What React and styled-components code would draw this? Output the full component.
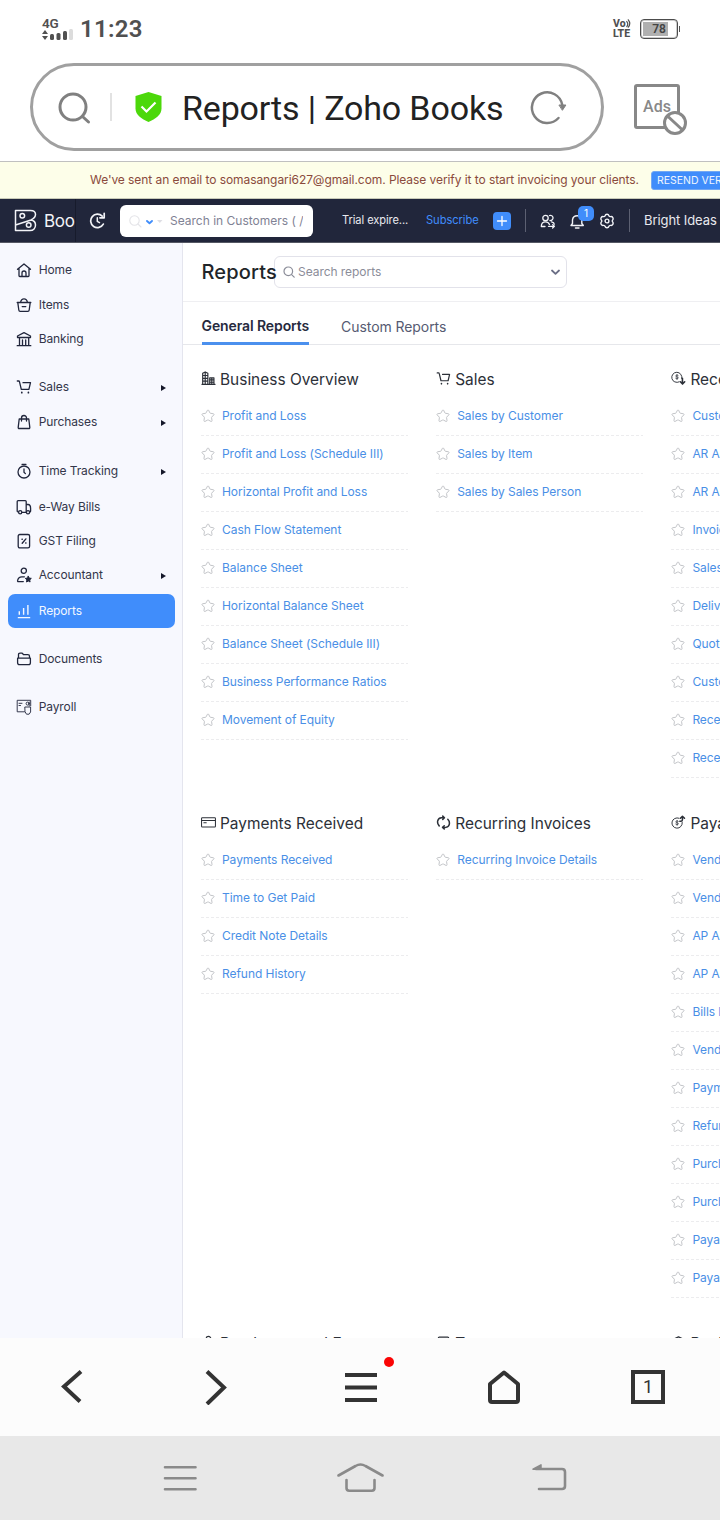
import React from "react";
import styled, { createGlobalStyle, css } from "styled-components";

const Global = createGlobalStyle`
  * { box-sizing: border-box; }
  html, body { margin: 0; padding: 0; background: #fff; }
  body { font-family: Inter, "Liberation Sans", sans-serif; overflow: hidden; }
`;

const Screen = styled.div`
  width: 720px;
  height: 1520px;
  display: flex;
  flex-direction: column;
  overflow: hidden;
  background: #fff;
`;

/* ---------- phone status bar ---------- */
const StatusBar = styled.header`
  height: 56px;
  flex: none;
  display: flex;
  align-items: flex-start;
  padding: 16px 42px 0 42px;
  color: #505050;
  font-family: Roboto, sans-serif;
`;
const Signal = styled.div`
  width: 31px;
  margin-right: 7px;
  font-size: 13.5px;
  line-height: 14px;
  font-weight: 600;
  letter-spacing: -0.3px;
  svg { display: block; margin-top: -1px; }
`;
const Clock = styled.div`
  flex: 1;
  font-size: 24px;
  line-height: 26px;
  font-weight: 600;
  letter-spacing: 0.25px;
`;
const Volte = styled.div`
  width: 20px;
  margin: 3px 7px 0 0;
  font-size: 10.5px;
  line-height: 10px;
  font-weight: 800;
  display: flex;
  flex-direction: column;
  span:first-child { display: flex; }
`;
const Battery = styled.div`
  position: relative;
  width: 38px;
  height: 20px;
  margin-top: 3px;
  padding: 1.5px 2px;
  border: 1.5px solid #4c4c4c;
  border-radius: 4px;
  display: flex;
  background: linear-gradient(#b0b0b0, #b0b0b0) 2px 2px / 25px 14px no-repeat;
  box-shadow: inset 0 0 0 1px #ccc;
  justify-content: center;
  font-size: 12px;
  line-height: 15px;
  font-weight: 600;
  color: #444;
  &::after {
    content: "";
    position: absolute;
    right: -3px;
    top: 6px;
    width: 1px;
    height: 6px;
    background: #555;
  }
`;

/* ---------- browser address bar ---------- */
const AddressRow = styled.div`
  height: 105px;
  flex: none;
  display: flex;
  align-items: flex-start;
  padding: 7px 0 0 30px;
`;
const AddressBox = styled.div`
  width: 574px;
  height: 88px;
  border: 3px solid #a0a0a0;
  border-radius: 44px;
  display: flex;
  align-items: center;
  padding-left: 25px;
`;
const AddressDivider = styled.i`
  width: 2px;
  height: 28px;
  margin: 0 22px 0 18px;
  background: #e2e2e2;
`;
const PageTitle = styled.div`
  width: 347px;
  margin: 1px 0 0 19px;
  font: 400 34px/44px Roboto, sans-serif;
  color: #222;
  white-space: nowrap;
  letter-spacing: -0.15px;
`;
const AdsButton = styled.div`
  margin: 21px 0 0 30px;
  position: relative;
  width: 46px;
  height: 45px;
  border: 3px solid #888;
  border-radius: 3px;
  font: 500 16px/39px Roboto, sans-serif;
  text-align: center;
  color: #888;
  svg { position: absolute; left: 25px; top: 23px; }
`;

/* ---------- verification banner ---------- */
const Banner = styled.div`
  height: 38px;
  flex: none;
  display: flex;
  align-items: center;
  padding-left: 90px;
  border-top: 1px solid #c0c0c0;
  border-bottom: 1px solid #c9cbb8;
  background: #fdfee9;
  color: #8a4a3c;
  font-size: 12px;
  white-space: nowrap;
  overflow: hidden;
`;
const BannerText = styled.span`
  width: 561px;
  flex: none;
  padding-bottom: 2px;
  letter-spacing: -0.07px;
`;
const ResendButton = styled.button`
  flex: none;
  height: 19px;
  margin-top: 1px;
  padding: 0 5px;
  border: 1px solid #73a8f3;
  border-radius: 3px;
  background: #408dfb;
  color: #eef5ff;
  font: 400 10.5px/16px Inter, sans-serif;
  white-space: nowrap;
`;

/* ---------- app top bar ---------- */
const TopBar = styled.nav`
  height: 44px;
  flex: none;
  display: flex;
  align-items: center;
  border-bottom: 1px solid #555864;
  background: #21263b;
  color: #f2f3f7;
  white-space: nowrap;
  overflow: hidden;
`;
const Brand = styled.div`
  width: 76px;
  height: 43px;
  flex: none;
  padding-left: 14px;
  display: flex;
  align-items: center;
  border-right: 1px solid #171b2c;
  svg { flex: none; }
`;
const BrandName = styled.span`
  width: 31px;
  margin-left: 7px;
  overflow: hidden;
  font-size: 17px;
  line-height: 24px;
  letter-spacing: -0.3px;
`;
const Slot = styled.div`
  position: relative;
  flex: none;
  width: ${(p) => p.$w}px;
  margin-left: ${(p) => p.$ml || 0}px;
  display: flex;
  align-items: center;
`;
const GlobalSearch = styled.div`
  width: 193px;
  height: 32px;
  flex: none;
  margin-left: 14px;
  padding-left: 9px;
  border-radius: 6px;
  background: #fff;
  color: #7f8294;
  display: flex;
  align-items: center;
  font-size: 12px;
`;
const GlobalSearchText = styled.span`
  width: 133px;
  margin-left: 7px;
  overflow: hidden;
`;
const TopText = styled.span`
  flex: none;
  width: ${(p) => p.$w}px;
  margin-left: ${(p) => p.$ml}px;
  padding-bottom: 1px;
  font-size: ${(p) => p.$size}px;
  letter-spacing: -0.08px;
  color: ${(p) => p.$color || "#e8e9ee"};
`;
const AddButton = styled.button`
  width: 18px;
  height: 18px;
  margin: 1px 0 0 15px;
  padding: 0;
  flex: none;
  border: 0;
  border-radius: 4px;
  background: #408dfb;
  display: flex;
  align-items: center;
  justify-content: center;
`;
const TopDivider = styled.i`
  flex: none;
  width: 1px;
  height: 23px;
  margin-left: ${(p) => p.$ml}px;
  background: #5c6072;
`;
const Badge = styled.span`
  position: absolute;
  left: 9px;
  top: -7px;
  width: 16px;
  height: 15px;
  border-radius: 5px;
  background: #408dfb;
  color: #fff;
  font-size: 10px;
  line-height: 15px;
  text-align: center;
`;

/* ---------- body ---------- */
const Body = styled.div`
  height: 1095px;
  flex: none;
  display: flex;
  overflow: hidden;
`;
const Sidebar = styled.aside`
  width: 183px;
  flex: none;
  padding: 10px 7px 0 8px;
  border-right: 1px solid #e4e5ee;
  background: #f7f8fe;
`;
const NavItem = styled.div`
  height: 34px;
  margin-top: ${(p) => p.$gap}px;
  padding: 0 9px 0 8px;
  display: flex;
  align-items: center;
  border-radius: 7px;
  font-size: 12px;
  letter-spacing: -0.1px;
  color: #33364a;
  svg { color: #21263c; }
  ${(p) =>
    p.$active &&
    css`
      background: #408dfb;
      color: #f4f8ff;
      svg { color: #f4f8ff; }
    `}
`;
const NavLabel = styled.span`
  flex: 1;
  margin-left: 6.7px;
  padding-bottom: 2px;
`;
const Caret = styled.i`
  border-left: 5px solid #15182a;
  border-top: 3.5px solid transparent;
  border-bottom: 3.5px solid transparent;
  margin-top: 1px;
`;

const Main = styled.main`
  flex: 1;
  min-width: 0;
  overflow: hidden;
`;
const ReportsHeader = styled.div`
  height: 59px;
  padding: 0 0 1px 18.5px;
  display: flex;
  align-items: center;
  border-bottom: 1px solid #efeff2;
`;
const Heading = styled.h1`
  position: relative;
  z-index: 1;
  width: 72.5px;
  margin: 0;
  font-size: 20px;
  font-weight: 500;
  letter-spacing: 0.15px;
  color: #212529;
  white-space: nowrap;
`;
const ReportSearch = styled.div`
  width: 293px;
  height: 32px;
  padding: 0 6px 0 8px;
  border: 1px solid #e2e2ea;
  border-radius: 6px;
  background: #fff;
  display: flex;
  align-items: center;
  font-size: 12px;
  color: #8b8d99;
`;
const SearchHint = styled.span`
  flex: 1;
  margin-left: 3px;
  letter-spacing: -0.05px;
`;
const Tabs = styled.div`
  height: 43px;
  padding-left: 18.5px;
  display: flex;
  gap: 32px;
  border-bottom: 1px solid #e6e7eb;
`;
const Tab = styled.div`
  height: 43px;
  padding-top: ${(p) => (p.$active ? 15 : 16)}px;
  font-size: 14px;
  line-height: 18px;
  font-weight: ${(p) => (p.$active ? 600 : 400)};
  letter-spacing: ${(p) => (p.$active ? -0.1 : -0.07)}px;
  color: ${(p) => (p.$active ? "#262a3e" : "#565b72")};
  border-bottom: ${(p) => (p.$active ? "3px solid #4b90ee" : "0")};
  border-radius: 2px 2px 0 0;
`;
const Reports = styled.div`
  padding: 22px 0 0 18px;
`;
const Section = styled.section`
  display: flex;
  gap: 28.2px;
  margin-bottom: 33px;
`;
const Group = styled.div`
  width: 207px;
  flex: none;
`;
const GroupTitle = styled.h2`
  height: 31px;
  margin: 0;
  padding-bottom: 5px;
  display: flex;
  align-items: center;
  gap: 4px;
  font-size: 15.45px;
  line-height: 24px;
  font-weight: 400;
  color: #2c3038;
  white-space: nowrap;
  svg { flex: none; margin-top: -4px; }
`;
const ReportLink = styled.div`
  height: 38px;
  display: flex;
  align-items: center;
  gap: 7px;
  padding-bottom: 2px;
  font-size: 12px;
  letter-spacing: -0.05px;
  color: #4a8fe6;
  white-space: nowrap;
  background: repeating-linear-gradient(90deg, #ececee 0 3px, transparent 3px 5px) 0 100% / 100% 1px no-repeat;
`;
const LinkText = styled.span`
  padding-bottom: 2px;
`;

/* ---------- bottom bars ---------- */
const BrowserBar = styled.div`
  height: 98px;
  flex: none;
  display: grid;
  grid-template-columns: repeat(5, 144px);
  background: #fcfcfc;
`;
const BrowserButton = styled.div`
  position: relative;
  display: flex;
  align-items: center;
  justify-content: center;
`;
const Dot = styled.i`
  position: absolute;
  left: 96px;
  top: 19px;
  width: 10px;
  height: 10px;
  border-radius: 50%;
  background: #fa0505;
`;
const TabCount = styled.span`
  width: 34px;
  height: 34px;
  border: 4px solid #333;
  font: 400 18px/25px Roboto, sans-serif;
  text-align: center;
  color: #333;
`;
const SystemBar = styled.div`
  height: 84px;
  flex: none;
  display: flex;
  align-items: center;
  padding-left: 163px;
  background: #e8e8e8;
`;
const SystemButton = styled.div`
  display: flex;
  margin-right: ${(p) => p.$mr}px;
`;

/* ---------- icons ---------- */
const Svg = ({ w = 16, h = 16, vb, sw = 1.3, children, ...rest }) => (
  <svg
    width={w}
    height={h}
    viewBox={vb || `0 0 ${w} ${h}`}
    fill="none"
    stroke="currentColor"
    strokeWidth={sw}
    strokeLinecap="round"
    strokeLinejoin="round"
    {...rest}
  >
    {children}
  </svg>
);

const cart = (
  <>
    <path d="M1.3 2h1.3c.5 0 .8.3.9.8l1.8 7.6h7.6l1.6-6.7H7" />
    <path d="M5.8 13.4v.3M12.4 13.4v.3" strokeWidth="1.7" />
  </>
);

const navIcons = {
  home: <path d="M1.5 7.3L8 2l6.500 5.300M3 6.500v7.200c0 .5.3.8.8.8h8.400c.5 0 .8-.3.8-.8V6.500M6 14.300V11a2 2 0 014 0v3.300" />,
  items: <path d="M1.200 5.500h13.600M1.800 5.700l1 7.300c.1.800.6 1.300 1.300 1.300h7.800c.7 0 1.200-.5 1.300-1.300l1-7.300M4.500 5.300C5 3 6.300 1.800 8 1.800S11 3 11.500 5.300M6.200 9.600h3.600" />,
  banking: <path d="M1.500 6.500V5L8 1.700 14.500 5v1.500zM3.500 7v7M6.500 9v5M9.700 9v5M12.700 7v7M1.200 14.700h13.600" />,
  sales: cart,
  purchases: <path d="M3.200 5h9.600l1 8.300c.1.800-.3 1.200-1 1.200H3.200c-.7 0-1.100-.4-1-1.200zM5.500 7V4a2.500 2.500 0 015 0v3" />,
  time: (
    <>
      <circle cx="8" cy="9" r="6" />
      <path d="M8 6v3.200l1.400 1.400M6 1.300h4" />
    </>
  ),
  eway: (
    <>
      <path d="M2.300 12.800h-.5c-.3 0-.6-.3-.6-.7V2.500c0-.5.400-.9.900-.9h7.200c.5 0 .9.400.9.900v10M10.200 5.500h1.800c1.600 0 2.600 2 2.600 4v2.500c0 .4-.2.700-.5.800M6 13.300h4" />
      <circle cx="4.200" cy="13.200" r="1.600" />
      <circle cx="12" cy="13.200" r="1.600" />
    </>
  ),
  gst: (
    <>
      <rect x="2.200" y="1.500" width="11.400" height="13.400" rx="1.600" />
      <path d="M6.200 10.300l3.700-4.400M6 6.300h.3M9.700 10h.3" strokeWidth="1.400" />
    </>
  ),
  accountant: (
    <>
      <circle cx="7.800" cy="3.800" r="2.600" />
      <path d="M7.300 14.600H2.400c-.7 0-1-.5-.8-1.100.5-2.200 2-3.700 4.200-3.700h2.600" />
      <path d="M12.300 9.300l.9 1.800 2.100.3-1.600 1.500.4 2.100-1.800-1-1.800 1 .4-2.100-1.600-1.500 2.100-.3z" fill="currentColor" strokeWidth="1" />
    </>
  ),
  reports: <path d="M3.300 11.800V8.300M7.600 11.800V5M11.900 11.800V2M1.800 14.600h12.400" strokeWidth="1.400" strokeLinecap="butt" />,
  documents: <path d="M2.500 7V3.700C2.500 2.700 3 2.200 4 2.200h2.200l1.500 1.500h4.200c1 0 1.600.6 1.600 1.600V7M1.600 7.200h12.800v4.600c0 1.200-.7 1.900-1.900 1.900h-9c-1.200 0-1.900-.7-1.900-1.900z" />,
  payroll: (
    <g strokeWidth=".9">
      <path d="M8.500 12.800H1.200V1.300h13.500v5.500M3 4.300h3M3 6.500h1.500" />
      <path d="M9.200 8h5.400v5l-1.500 2.200h-2.600L9.200 13z" />
      <circle cx="11.600" cy="4.600" r="1.500" />
      <path d="M13.200 3v4" />
    </g>
  ),
};

const groupIcons = {
  business: (
    <g strokeWidth="1.250">
      <path d="M1.800 14V2.500L4.500 1l2.800 1.500V14M1 14.200h14M4.500 2v12M2 4.800h5M2 7.800h5M2 10.800h5M9.300 14V7.300h4.500V14M11.500 8v6M9.500 9.500h4M9.500 12h4" />
    </g>
  ),
  sales: cart,
  receivables: (
    <>
      <path d="M8.700 11.600A5.400 5.400 0 1111.500 8" strokeWidth="1" />
      <path d="M7.700 4.700c-.4-.5-2.700-.7-2.700.6 0 1.500 2.800.6 2.800 2 0 1.300-2.300 1.200-2.900.5M6.400 3.800v5.200" strokeWidth=".8" />
      <path d="M12.200 7.700v5.800M10 11.500l2.300 2.400 2.300-2.400" strokeWidth="1.700" />
    </>
  ),
  payments: (
    <g strokeWidth="1.100">
      <rect x=".6" y="3" width="14.800" height="9.800" rx=".8" />
      <path d="M1 5.800h14" />
      <path d="M3 8.300h2.600" />
    </g>
  ),
  recurring: (
    <g strokeWidth="1.600">
      <path d="M3.400 11.600C.5 8.500 1.300 3.300 5.800 3H8.600M7.200 1.200l1.800 1.800-1.800 1.800M12.600 4.600C15.500 7.700 14.700 12.900 10.200 13.200H7.400M8.800 11.400L7 13.200l1.800 1.800" />
    </g>
  ),
  payables: (
    <>
      <path d="M8.500 3.400A5.500 5.500 0 1012 8" strokeWidth="1" />
      <path d="M7.800 6.700c-.4-.5-2.700-.7-2.700.6 0 1.500 2.800.6 2.800 2 0 1.300-2.300 1.200-2.900.5M6.500 5.800V11" strokeWidth=".8" />
      <path d="M9.400 6.700h1.200c1 0 1.600-.6 1.600-1.600V2M10 3.500l2.200-2.200 2.200 2.200" strokeWidth="1.600" />
    </>
  ),
  expenses: navIcons.purchases,
  taxes: <rect x="2.500" y="2.200" width="11" height="12" rx="1" />,
  banking: <path d="M1.500 6V5L8 2l6.500 3v1z" />,
};

const StarIcon = () => (
  <Svg w={14} h={14} vb="0 0 16 16" sw={1} color="#b9bbc0">
    <path d="M7.300 1.500c.3-.6 1.100-.6 1.400 0l1.500 3c.1.200.3.400.6.400l3.300.5c.7.100 1 .9.500 1.400l-2.300 2.400c-.2.200-.3.400-.2.700l.5 3.400c.1.700-.6 1.200-1.200.9l-3-1.600a.8.800 0 00-.8 0l-3 1.600c-.6.300-1.300-.2-1.200-.9l.5-3.400c0-.3 0-.5-.2-.7L1.400 6.800c-.5-.5-.2-1.300.5-1.400l3.300-.5c.3 0 .5-.2.6-.4z" />
  </Svg>
);

/* ---------- data ---------- */
const nav = [
  ["home", "Home", 0],
  ["items", "Items", 1],
  ["banking", "Banking", 0],
  ["sales", "Sales", 14, true],
  ["purchases", "Purchases", 1, true],
  ["time", "Time Tracking", 15, true],
  ["eway", "e-Way Bills", 2],
  ["gst", "GST Filing", 0],
  ["accountant", "Accountant", 0, true],
  ["reports", "Reports", 2],
  ["documents", "Documents", 14],
  ["payroll", "Payroll", 14],
];

const sections = [
  [
    ["business", "Business Overview", ["Profit and Loss", "Profit and Loss (Schedule III)", "Horizontal Profit and Loss", "Cash Flow Statement", "Balance Sheet", "Horizontal Balance Sheet", "Balance Sheet (Schedule III)", "Business Performance Ratios", "Movement of Equity"]],
    ["sales", "Sales", ["Sales by Customer", "Sales by Item", "Sales by Sales Person"]],
    ["receivables", "Receivables", ["Customer Balances", "AR Aging Summary", "AR Aging Details", "Invoice Details", "Sales Order Details", "Delivery Challan Details", "Quote Details", "Customer Balance Summary", "Receivable Summary", "Receivable Details"]],
  ],
  [
    ["payments", "Payments Received", ["Payments Received", "Time to Get Paid", "Credit Note Details", "Refund History"]],
    ["recurring", "Recurring Invoices", ["Recurring Invoice Details"]],
    ["payables", "Payables", ["Vendor Balances", "Vendor Balance Summary", "AP Aging Summary", "AP Aging Details", "Bills Details", "Vendor Credits Details", "Payments Made", "Refund History", "Purchase Order Details", "Purchase Orders by Vendor", "Payable Summary", "Payable Details"]],
  ],
  [
    ["expenses", "Purchases and Expenses", []],
    ["taxes", "Taxes", []],
    ["banking", "Banking", []],
  ],
];

export default function App() {
  return (
    <Screen>
      <Global />
      <StatusBar>
        <Signal>
          4G
          <svg width="31" height="12" fill="#505050">
            <path d="M0 5l3-4 3 4zM0 7h6l-3 4z" />
            <rect x="8" y="5" width="4" height="6" rx="1.500" />
            <rect x="14.500" y="4" width="4" height="7" rx="1.500" />
            <rect x="21" y="2" width="4" height="9" rx="1.500" />
            <rect x="27" y="0" width="4" height="11" rx="1.500" fill="#dcdcdc" />
          </svg>
        </Signal>
        <Clock>11:23</Clock>
        <Volte>
          <span>
            Vo
            <Svg w={6} h={9} sw={1.200}>
              <path d="M.8 2.500a4 4 0 010 5M2.300.8a6 6 0 010 7.400" />
            </Svg>
          </span>
          <span>LTE</span>
        </Volte>
        <Battery>78</Battery>
      </StatusBar>

      <AddressRow>
        <AddressBox>
          <Svg w={34} h={34} sw={3} color="#808080" overflow="visible">
            <circle cx="15" cy="17" r="13" />
            <path d="M24.500 26.500l6 5.500" />
          </Svg>
          <AddressDivider />
          <svg width="29" height="32" viewBox="0 0 29 32">
            <path d="M14.500 1l13 4v12.500c0 6.500-6 10.500-13 13.500-7-3-13-7-13-13.500V5z" fill="#4cd80a" />
            <path d="M7.500 15.500l5 5 9-9" fill="none" stroke="#fff" strokeWidth="2.200" />
          </svg>
          <PageTitle>Reports | Zoho Books</PageTitle>
          <Svg w={40} h={38} sw={2.500} color="#808080">
            <path d="M29.500 30A15.300 15.300 0 1133.300 17" />
            <path d="M30.300 17h6.600l-3.300 5z" fill="currentColor" strokeWidth="1" />
          </Svg>
        </AddressBox>
        <AdsButton>
          Ads
          <Svg w={26} h={26} sw={3} color="#888">
            <circle cx="13" cy="13" r="10.500" fill="#fff" />
            <path d="M6 6.500l14 13" />
          </Svg>
        </AdsButton>
      </AddressRow>

      <Banner>
        <BannerText>We've sent an email to somasangari627@gmail.com. Please verify it to start invoicing your clients.</BannerText>
        <ResendButton>RESEND VERIFICATION EMAIL</ResendButton>
      </Banner>

      <TopBar>
        <Brand>
          <Svg w={23} h={23} sw={1.500}>
            <path d="M1.500 1.500h15c3.500 0 5 2 5 4s-1.500 4-4.500 5.500L1.500 16zM1.500 16v5.500h14.500c3.500 0 5.500-2.500 5.500-5.500 0-2.500-1.500-4.500-4.500-5" />
            <circle cx="8.300" cy="6.800" r="2.300" />
            <circle cx="14.700" cy="16" r="2.300" />
          </Svg>
          <BrandName>Books</BrandName>
        </Brand>
        <Slot $w={17} $ml={13}>
          <Svg w={17} h={17} sw={1.700}>
            <path d="M14.300 12.100A6.700 6.700 0 1113.200 4.200M15.200 1.300v4.500h-4.300" />
            <path d="M8.300 5.800v3.600l2.200 1.300" strokeWidth="1.500" />
          </Svg>
        </Slot>
        <GlobalSearch>
          <Svg w={34} h={14} sw={1.100} color="#e4e4e8">
            <circle cx="5.500" cy="6.500" r="4.700" />
            <path d="M9 10l3 3" />
            <path d="M18 7l2.500 2.200L23 7" stroke="#408dfb" strokeWidth="1.900" />
            <path d="M28 6h5.500l-2.700 3z" fill="#dedee4" stroke="none" />
          </Svg>
          <GlobalSearchText>Search in Customers ( /</GlobalSearchText>
        </GlobalSearch>
        <TopText $ml={29} $w={70} $size={11.100}>Trial expire...</TopText>
        <TopText $ml={14} $w={52} $size={11.200} $color="#408dfb">Subscribe</TopText>
        <AddButton>
          <Svg w={12} h={12} sw={1.300} color="#fff">
            <path d="M6 1.500v9M1.500 6h9" />
          </Svg>
        </AddButton>
        <TopDivider $ml={14} />
        <Slot $w={16} $ml={14}>
          <Svg sw={1.300}>
            <circle cx="5.500" cy="5" r="2.700" />
            <path d="M1.300 13.500c0-3 1.500-4.700 4.200-4.700 2 0 3.300 1 4 2.700M9.500 2.500A2.600 2.600 0 1110 7.500M11.500 8.800c1.800.4 2.700 1.200 2.800 2.400M8.500 13.300h5.500M12.600 11.600l1.800 1.700-1.800 1.700M1.300 13.500h3.700" />
          </Svg>
        </Slot>
        <Slot $w={16} $ml={13}>
          <Svg sw={1.400}>
            <path d="M3.500 10.500V6.800a4.700 4.700 0 019.300 0v3.700l1.500 2H2zM6.500 15h3.500" />
          </Svg>
          <Badge>1</Badge>
        </Slot>
        <Slot $w={16} $ml={14}>
          <Svg sw={1.400}>
            <path d="M6.200 2.500C6.600.9 9.400.9 9.800 2.500c.3.900 1 1.300 2 1.100 1.700-.3 3.100 2.100 1.900 3.300-.7.700-.7 1.500 0 2.200 1.200 1.200-.2 3.600-1.900 3.300-1-.2-1.700.2-2 1.100-.4 1.600-3.200 1.600-3.600 0-.3-.9-1-1.300-2-1.100-1.700.3-3.100-2.100-1.900-3.300.7-.7.7-1.500 0-2.200C1.100 5.700 2.500 3.300 4.200 3.600c1 .2 1.700-.2 2-1.100z" />
            <circle cx="8" cy="8" r="1.900" />
          </Svg>
        </Slot>
        <TopDivider $ml={14} />
        <TopText $ml={14} $w={100} $size={13}>Bright Ideas</TopText>
      </TopBar>

      <Body>
        <Sidebar>
          {nav.map(([icon, label, gap, caret]) => (
            <NavItem key={label} $gap={gap} $active={label === "Reports"}>
              <Svg>{navIcons[icon]}</Svg>
              <NavLabel>{label}</NavLabel>
              {caret && <Caret />}
            </NavItem>
          ))}
        </Sidebar>
        <Main>
          <ReportsHeader>
            <Heading>Reports</Heading>
            <ReportSearch>
              <Svg w={12} h={12} sw={1.200}>
                <circle cx="5.300" cy="5.300" r="4.300" />
                <path d="M8.600 8.600l2.600 2.600" />
              </Svg>
              <SearchHint>Search reports</SearchHint>
              <Svg w={9} h={8} sw={1.800} color="#6a6e85">
                <path d="M1 2.500l3.500 3.300L8 2.500" />
              </Svg>
            </ReportSearch>
          </ReportsHeader>
          <Tabs>
            <Tab $active>General Reports</Tab>
            <Tab>Custom Reports</Tab>
          </Tabs>
          <Reports>
            {sections.map((groups, i) => (
              <Section key={i}>
                {groups.map(([icon, title, links]) => (
                  <Group key={title}>
                    <GroupTitle>
                      <Svg w={15} h={15} vb="0 0 16 16">{groupIcons[icon]}</Svg>
                      {title}
                    </GroupTitle>
                    {links.map((link) => (
                      <ReportLink key={link}>
                        <StarIcon />
                        <LinkText>{link}</LinkText>
                      </ReportLink>
                    ))}
                  </Group>
                ))}
              </Section>
            ))}
          </Reports>
        </Main>
      </Body>

      <BrowserBar>
        <BrowserButton>
          <Svg w={22} h={34} sw={4} strokeLinecap="butt" strokeLinejoin="miter" color="#333">
            <path d="M20 1.500L3 16.500l16 15" />
          </Svg>
        </BrowserButton>
        <BrowserButton>
          <Svg w={22} h={36} sw={4} strokeLinecap="butt" strokeLinejoin="miter" color="#333">
            <path d="M2 2.500l17 16L2 35" />
          </Svg>
        </BrowserButton>
        <BrowserButton>
          <Svg w={34} h={32} sw={4} strokeLinecap="butt" color="#333">
            <path d="M2 4h32M2 16.500h32M2 29h32" />
          </Svg>
          <Dot />
        </BrowserButton>
        <BrowserButton>
          <Svg w={32} h={34} sw={4} color="#333">
            <path d="M16 2.500l14 11.500v16c0 1.500-.6 2-2 2H4c-1.400 0-2-.5-2-2V14z" />
          </Svg>
        </BrowserButton>
        <BrowserButton>
          <TabCount>1</TabCount>
        </BrowserButton>
      </BrowserBar>

      <SystemBar>
        <SystemButton $mr={139}>
          <Svg w={34} h={28} sw={2.600} color="#8a8a8a">
            <path d="M2 3.300h30.500M2 14.300h30.500M2 25.300h30.500" />
          </Svg>
        </SystemButton>
        <SystemButton $mr={148}>
          <Svg w={48} h={32} sw={2.600} color="#8a8a8a">
            <path d="M2.500 13.500L19.500 4q5-3 10 0l17 9.500M10.500 18v8c0 1.800 1 2.700 2.700 2.700h22.600c1.700 0 2.700-.9 2.700-2.700v-8" />
          </Svg>
        </SystemButton>
        <SystemButton $mr={0}>
          <Svg w={36} h={28} sw={2.600} color="#8a8a8a">
            <path d="M4 5h26c2 0 3 1 3 3v14c0 2-1 3-3 3H7" />
            <path d="M1 5.200L9 .8v4.400z" fill="currentColor" strokeWidth="1.500" />
          </Svg>
        </SystemButton>
      </SystemBar>
    </Screen>
  );
}
